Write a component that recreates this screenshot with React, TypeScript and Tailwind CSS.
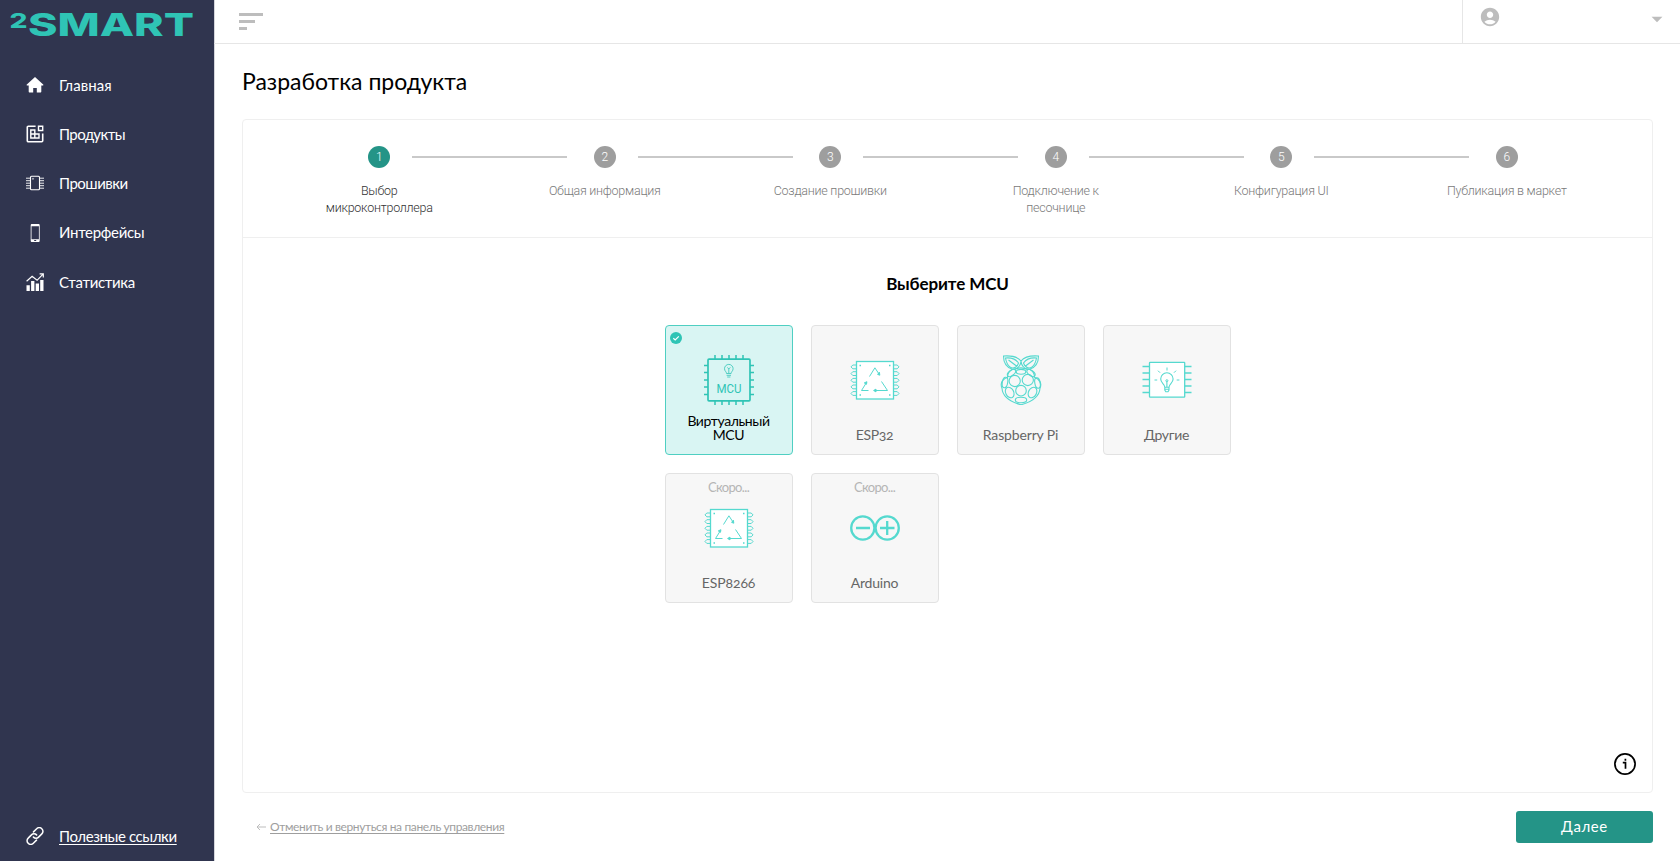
import type { ReactNode } from "react";
import { MdAccountCircle, MdArrowDropDown } from "react-icons/md";

type McuCard = {
  id: string;
  name: string;
  icon: ReactNode;
  tracking: string;
  selected?: boolean;
  soon?: boolean;
};

function Logo() {
  return (
    <svg viewBox="0 0 190 44" className="h-[44px] w-[190px] fill-[#2fc4b5] font-['Inter']">
      <text x="-.5" y="28" fontSize="20" fontWeight="800" textLength="18" lengthAdjust="spacingAndGlyphs">
        2
      </text>
      <text x="18" y="36" fontSize="31.500" fontWeight="800" textLength="166" lengthAdjust="spacingAndGlyphs">
        SMART
      </text>
    </svg>
  );
}

function HomeIcon() {
  return (
    <svg viewBox="0 0 18 18" className="size-[18px] fill-white">
      <path d="M9 1 .8 8.400c-.4.5-.1 1 .5 1h1.400v6.100c0 .6.4 1 1 1h3.500v-4.600h3.600v4.600h3.500c.6 0 1-.4 1-1V9.400h1.400c.6 0 .9-.5.5-1Z" />
    </svg>
  );
}

function ProductsIcon() {
  return (
    <svg viewBox="0 0 18 18" className="size-[18px] fill-none stroke-white stroke-[1.6]">
      <path d="M9.600 1.300H2.300a1 1 0 0 0-1 1v13.400a1 1 0 0 0 1 1h13.400a1 1 0 0 0 1-1V8.500" />
      <path d="M12.500 1.300h4.200v4.200h-4.200zM4.800 5h4v4h-4zM4.800 9h4v4h-4zM8.800 9h4.200v4h-4.200z" strokeWidth="1.400" />
    </svg>
  );
}

function FirmwareIcon() {
  return (
    <svg viewBox="0 0 18 18" className="size-[18px] fill-none stroke-white">
      <rect x="4.500" y="2.200" width="9" height="13.600" rx="1" strokeWidth="1.100" />
      <circle cx="7" cy="4.800" r=".6" strokeWidth=".6" />
      <path d="M0 4.200h4M0 6.700h4M0 9.200h4M0 11.700h4M0 14.200h4M14 4.200h4M14 6.700h4M14 9.200h4M14 11.700h4M14 14.200h4" strokeWidth=".9" />
    </svg>
  );
}

function PhoneIcon() {
  return (
    <svg viewBox="0 0 18 18" className="size-[18px] fill-white">
      <path fillRule="evenodd" d="M6 0h6.400c.8 0 1.300.5 1.300 1.300v15.400c0 .8-.5 1.300-1.300 1.300H6c-.8 0-1.300-.5-1.300-1.300V1.300C4.700.5 5.200 0 6 0Zm-.5 2.300v12.900h7.400V2.300Zm2.700 13.800v.8h2v-.8Z" />
    </svg>
  );
}

function StatsIcon() {
  return (
    <svg viewBox="0 0 18 18" className="size-[18px] fill-white">
      <path d="M.5 12.200h3.300V18H.5zM5.100 8h3.300v10H5.100zM9.700 10.500H13V18H9.700zM14.200 7h3.300v11h-3.300z" />
      <path d="m.6 8.300 5.500-5 5 4L17 1.200M13.600.9h3.700v3.600" className="fill-none stroke-white stroke-[1.2]" />
    </svg>
  );
}

function LinkIcon() {
  return (
    <svg viewBox="0 0 24 24" className="size-[18px] fill-none stroke-white stroke-[2]" strokeLinecap="round">
      <path d="m10 6.500 4.200-4.200a4.700 4.700 0 0 1 6.900 0 4.700 4.700 0 0 1 0 6.900l-4.300 4.300a4.700 4.700 0 0 1-6.900 0" />
      <path d="m14 17.500-4.200 4.200a4.700 4.700 0 0 1-6.900 0 4.700 4.700 0 0 1 0-6.900l4.300-4.300a4.700 4.700 0 0 1 6.900 0" />
    </svg>
  );
}

function VirtualMcuIcon() {
  return (
    <svg viewBox="0 0 50 50" className="size-[50px] fill-none stroke-[#2fc4b5]">
      <rect x="4" y="4.200" width="42" height="41.600" rx="1" strokeWidth="1.700" />
      <path d="M11 0v4M18 0v4M25 0v4M32 0v4M39 0v4M11 46v4M18 46v4M25 46v4M32 46v4M39 46v4M0 10.500h4M0 17.500h4M0 25h4M0 32h4M0 39.500h4M46 10.500h4M46 17.500h4M46 25h4M46 32h4M46 39.500h4" strokeWidth="1.500" />
      <path d="M22.500 18.500c0-2-2-2.300-2-4.800a4.300 4.300 0 0 1 8.600 0c0 2.500-2 2.800-2 4.800ZM22.600 20.300h4.400M23.200 22h3.200M24.800 18v-4l-1.400-1.600M24.800 14l1.500-1.600" strokeWidth=".8" />
      <text x="12.500" y="37.500" fontSize="12" textLength="25" lengthAdjust="spacingAndGlyphs" className="fill-[#2fc4b5] stroke-none font-['Roboto']">
        MCU
      </text>
    </svg>
  );
}

function EspIcon() {
  return (
    <svg viewBox="0 0 50 50" className="size-[50px] fill-none stroke-[#55d9cf] stroke-1">
      <path d="M6.500 10H2.800L1 11.900l1.800 1.900h3.700M6.500 16.700H2.800L1 18.600l1.800 1.900h3.700M6.500 23.400H2.800L1 25.300l1.800 1.900h3.700M6.500 30H2.800L1 31.900l1.800 1.900h3.700M6.500 36.600H2.800L1 38.500l1.800 1.900h3.700M43.500 10h3.700l1.800 1.900-1.800 1.900h-3.700M43.500 16.700h3.700l1.800 1.900-1.800 1.900h-3.700M43.500 23.400h3.700l1.800 1.900-1.800 1.900h-3.700M43.500 30h3.700l1.800 1.900-1.800 1.900h-3.700M43.500 36.600h3.700l1.800 1.900-1.800 1.900h-3.700" />
      <rect x="6.500" y="6.500" width="37" height="37.500" className="fill-white stroke-[1.3]" />
      <path d="m19.500 21.500 5.400-8.700 4.300 6.500M31.500 26.500l6 9M37.500 35.500h-12M18.500 35.500h-7M11.500 35.500l5-8" />
      <path d="m29.800 20.200-.4-3-1.800 2.200ZM16.900 26.700l-2.600 1.200 2.200 1.400ZM23.600 35.500l2.400 1.400v-2.800Z" className="fill-[#55d9cf]" />
      <path d="M9.500 10.500h1.500M39 10.500h1.500M9.500 40h1.500M39 40h1.500" strokeWidth="1.400" />
    </svg>
  );
}

function RaspberryIcon() {
  return (
    <svg viewBox="0 0 50 50" className="size-[50px] fill-none stroke-[#55d9cf] stroke-[1.1]">
      <path d="M25 6C21 1 14 .5 7.500 1c0 6 3 11.500 9 13.300C21 14 24.500 12 25 6Zm0 0c4-5 11-5.500 17.500-5 0 6-3 11.500-9 13.300C29 14 25.500 12 25 6Z" />
      <path d="M9.500 3c5-.5 10 .7 13 5-1.500 5-5.500 6-8.500 4-2.500-1.900-4-6-4.500-9Zm31 0c-5-.5-10 .7-13 5 1.500 5 5.500 6 8.500 4 2.500-1.900 4-6 4.500-9ZM12.500 5l8 6M37.500 5l-8 6" />
      <path d="M16.500 14.300c-4 2-5 5-5 8-5 2-7.500 6-5.500 11 .5 8 8 13.500 19 16.500 11-3 18.500-8.500 19-16.500 2-5-.5-9-5.500-11 0-3-1-6-5-8M18.500 14.500c4-2 9-2 13 0" />
      <circle cx="18.700" cy="26" r="5.600" />
      <circle cx="31.800" cy="25" r="5.600" />
      <circle cx="25" cy="35.700" r="5.300" />
      <ellipse cx="25" cy="16.800" rx="4.800" ry="2.400" />
      <ellipse cx="15.500" cy="18" rx="4.800" ry="2.500" transform="rotate(-38 15.500 18)" />
      <ellipse cx="35" cy="18" rx="4.800" ry="2.500" transform="rotate(38 35 18)" />
      <ellipse cx="9" cy="27.500" rx="2.700" ry="5.300" transform="rotate(10 9 27.500)" />
      <ellipse cx="41.500" cy="28" rx="2.700" ry="5.300" transform="rotate(-10 41.500 28)" />
      <ellipse cx="13.700" cy="37.500" rx="4" ry="5.600" transform="rotate(-28 13.700 37.500)" />
      <ellipse cx="36.500" cy="37.500" rx="4" ry="5.600" transform="rotate(28 36.500 37.500)" />
      <ellipse cx="25" cy="45" rx="5.700" ry="2.700" />
    </svg>
  );
}

function OtherIcon() {
  return (
    <svg viewBox="0 0 50 50" className="size-[50px] fill-none stroke-[#55d9cf] stroke-[1.3]">
      <path d="M.5 11.500h7M.5 18h7M.5 24.500h7M.5 31h7M.5 37.500h7M42.500 11.500h7M42.500 18h7M42.500 24.500h7M42.500 31h7M42.500 37.500h7" />
      <rect x="7.500" y="7.400" width="35.200" height="34.700" rx=".6" className="fill-white" />
      <path d="M22.800 32.300c0-3.600-4.100-4-4.100-8.300a6.200 6.200 0 0 1 12.400 0c0 4.300-4.100 4.700-4.100 8.300Zm0 0v2.800l1 1.600h2.200l1-1.600v-2.800M24.900 32v-5.500M22.800 34.300H27" className="stroke-[1.1]" />
      <circle cx="24.900" cy="25.700" r="1" className="stroke-1" />
      <path d="M25 12.500v3M16 15.700l2 2M34 15.700l-2 2M12.500 25h2.700M34.700 25h2.700" className="stroke-1" />
    </svg>
  );
}

function ArduinoIcon() {
  return (
    <svg viewBox="0 0 50 50" className="size-[50px] fill-none stroke-[#55d9cf] stroke-[2.3]">
      <circle cx="12.800" cy="25" r="11.600" />
      <circle cx="37.200" cy="25" r="11.600" />
      <path d="M6 25h14M30 25h14.500M37.200 18v14" />
    </svg>
  );
}

const NAV_ITEMS = [
  { label: "Главная", icon: <HomeIcon />, tracking: "tracking-[0.1px]" },
  { label: "Продукты", icon: <ProductsIcon />, tracking: "tracking-[-0.55px]" },
  { label: "Прошивки", icon: <FirmwareIcon />, tracking: "tracking-[-0.5px]" },
  { label: "Интерфейсы", icon: <PhoneIcon />, tracking: "tracking-[-0.32px]" },
  { label: "Статистика", icon: <StatsIcon />, tracking: "tracking-[-0.35px]" },
];

const STEPS = [
  "Выбор микроконтроллера",
  "Общая информация",
  "Создание прошивки",
  "Подключение к песочнице",
  "Конфигурация UI",
  "Публикация в маркет",
];

const MCU_CARDS: McuCard[] = [
  { id: "virtual", name: "Виртуальный MCU", icon: <VirtualMcuIcon />, tracking: "tracking-[-0.4px]", selected: true },
  { id: "esp32", name: "ESP32", icon: <EspIcon />, tracking: "tracking-[-0.3px]" },
  { id: "raspberry", name: "Raspberry Pi", icon: <RaspberryIcon />, tracking: "tracking-[-0.15px]" },
  { id: "other", name: "Другие", icon: <OtherIcon />, tracking: "tracking-[-0.3px]" },
  { id: "esp8266", name: "ESP8266", icon: <EspIcon />, tracking: "tracking-[-0.1px]", soon: true },
  { id: "arduino", name: "Arduino", icon: <ArduinoIcon />, tracking: "tracking-[-0.2px]", soon: true },
];

function Sidebar() {
  return (
    <aside className="flex w-[214px] shrink-0 flex-col bg-[#30354f] text-white shadow-[1px_0_0_#d5d6dc]">
      <div className="h-[60.500px] pl-[10px]">
        <Logo />
      </div>
      <nav className="flex flex-col text-[15px]">
        {NAV_ITEMS.map((item) => (
          <a key={item.label} className="flex h-[49.200px] items-center gap-[15px] pl-[26px]">
            {item.icon}
            <span className={item.tracking}>{item.label}</span>
          </a>
        ))}
      </nav>
      <a className="mt-auto mb-[14px] flex h-[22px] items-center gap-[15px] pl-[26px] text-[15px]">
        <LinkIcon />
        <span className="tracking-[-0.4px] underline underline-offset-2">Полезные ссылки</span>
      </a>
    </aside>
  );
}

function Header() {
  return (
    <header className="flex h-[44px] shrink-0 border-b border-[#e6e6e6] text-[#bdbdbd]">
      <div className="flex flex-1 flex-col gap-[4.500px] pt-[13px] pl-[25px]">
        <span className="h-[2.500px] w-6 bg-current" />
        <span className="h-[2.500px] w-4 bg-current" />
        <span className="h-[2.500px] w-2 bg-current" />
      </div>
      <div className="flex w-[218px] justify-between border-l border-[#e6e6e6] pt-[6px] pr-[10px] pl-[16px]">
        <MdAccountCircle className="size-[22px]" />
        <MdArrowDropDown className="size-[26px]" />
      </div>
    </header>
  );
}

function Stepper() {
  return (
    <ol className="flex h-[118px] shrink-0 border-b border-[#efefef] pt-[26px] pr-[32.500px] pl-[23.500px] font-['Roboto'] font-light">
      {STEPS.map((step, index) => (
        <li key={step} className="relative flex flex-1 flex-col items-center">
          <span
            className={`flex size-[22px] items-center justify-center rounded-full text-xs text-white ${index === 0 ? "bg-[#249487]" : "bg-[#9e9e9e]"}`}
          >
            {index + 1}
          </span>
          <span
            className={`mt-[14px] w-[130px] text-center text-[12.500px] leading-[17.500px] tracking-[-0.25px] ${index === 0 ? "text-[#333]" : "text-[#7a7a7a]"}`}
          >
            {step}
          </span>
          {index < STEPS.length - 1 ? (
            <span className="absolute top-[10px] left-[calc(50%+33px)] h-[2px] w-[155px] bg-[#c9c9c9]" />
          ) : null}
        </li>
      ))}
    </ol>
  );
}

function McuTile({ card }: { card: McuCard }) {
  return (
    <button
      className={`relative flex h-[130px] w-[128px] flex-col items-center rounded border pt-[29.500px] ${card.selected ? "border-[#4fcfc2] bg-[#d9f5f3] text-black" : "border-[#e2e2e2] bg-[#f7f7f7] text-[#666]"}`}
    >
      {card.selected ? (
        <svg viewBox="0 0 12 12" className="absolute top-[6px] left-[4.500px] size-3">
          <circle cx="6" cy="6" r="6" className="fill-[#2fc4b5]" />
          <path d="m3.300 6.200 1.900 1.700 3.600-3.600" className="fill-none stroke-white stroke-[1.2]" />
        </svg>
      ) : null}
      {card.soon ? (
        <span className="absolute top-[5px] text-[13px] leading-4 tracking-[-0.65px] text-[#b5b5b5]">Скоро...</span>
      ) : null}
      {card.icon}
      <span
        className={`mt-auto mb-[12px] w-[100px] text-center text-[14px] leading-[14px] [font-variant-numeric:oldstyle-nums] ${card.tracking}`}
      >
        {card.name}
      </span>
    </button>
  );
}

export default function App() {
  return (
    <div className="flex h-[861px] w-full overflow-hidden bg-white font-['Lato',sans-serif]">
      <Sidebar />
      <div className="flex min-w-0 flex-1 flex-col">
        <Header />
        <main className="flex flex-1 flex-col pr-[27px] pl-[28px]">
          <h1 className="mt-[19px] text-[23px] leading-9 text-black">Разработка продукта</h1>
          <section className="relative mt-[19.500px] flex h-[674px] flex-col rounded-[4px] border border-[#efefef]">
            <Stepper />
            <h2 className="mt-[32px] text-center text-[17px] leading-7 font-bold tracking-[-0.1px] text-black">Выберите MCU</h2>
            <div className="mx-auto mt-[27px] grid grid-cols-[repeat(4,128px)] gap-[18px]">
              {MCU_CARDS.map((card) => (
                <McuTile key={card.id} card={card} />
              ))}
            </div>
            <svg viewBox="0 0 22 22" className="absolute right-[16px] bottom-[17px] size-[22px] fill-none stroke-black stroke-[1.7]">
              <circle cx="11" cy="11" r="10.100" />
              <path d="M8.800 9.600h2.700v6.200M11.400 5.800v2" />
            </svg>
          </section>
          <footer className="mt-[18.500px] flex items-center justify-between">
            <a className="flex items-center gap-[4px] pl-[14px] text-[12px] text-[#9e9e9e]">
              <svg viewBox="0 0 10 8" className="h-2 w-[10px] fill-none stroke-[#bdbdbd]">
                <path d="M10 4H1M4 1 1 4l3 3" />
              </svg>
              <span className="tracking-[-0.37px] underline underline-offset-2">Отменить и вернуться на панель управления</span>
            </a>
            <button className="h-[32px] w-[137px] rounded-[3px] bg-[#249487] pb-px text-[15px] tracking-[0.600px] text-white">Далее</button>
          </footer>
        </main>
      </div>
    </div>
  );
}
